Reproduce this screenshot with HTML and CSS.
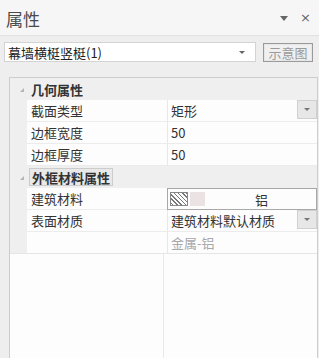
FILE: index.html
```html
<!DOCTYPE html>
<html lang="zh-CN">
<head>
    <meta charset="UTF-8">
    <title>属性</title>
    <link rel="stylesheet" href="styles.css">
</head>
<body>
    <div class="panel">
        <div class="header">
            <span class="title">属性</span>
            <span class="header-tools">
                <span class="menu-arrow"></span>
                <span class="close">×</span>
            </span>
        </div>
        <div class="toolbar">
            <div class="combo">
                <span>幕墙横梃竖梃(1)</span>
                <span class="combo-arrow"></span>
            </div>
            <button class="preview-btn">示意图</button>
        </div>
        <div class="grid">
            <div class="row category">
                <div class="gutter"><span class="expander"></span></div>
                <div class="cat-label">几何属性</div>
            </div>
            <div class="row">
                <div class="gutter"></div>
                <div class="name">截面类型</div>
                <div class="value">
                    <span>矩形</span>
                    <span class="drop-btn"><span class="drop-arrow"></span></span>
                </div>
            </div>
            <div class="row">
                <div class="gutter"></div>
                <div class="name">边框宽度</div>
                <div class="value">50</div>
            </div>
            <div class="row">
                <div class="gutter"></div>
                <div class="name">边框厚度</div>
                <div class="value">50</div>
            </div>
            <div class="row category">
                <div class="gutter"><span class="expander"></span></div>
                <div class="cat-label focused">外框材料属性</div>
            </div>
            <div class="row">
                <div class="gutter"></div>
                <div class="name">建筑材料</div>
                <div class="value material">
                    <span class="hatch"></span>
                    <span class="swatch"></span>
                    <span class="material-name">铝</span>
                </div>
            </div>
            <div class="row">
                <div class="gutter"></div>
                <div class="name">表面材质</div>
                <div class="value">
                    <span>建筑材料默认材质</span>
                    <span class="drop-btn"><span class="drop-arrow"></span></span>
                </div>
            </div>
            <div class="row">
                <div class="gutter"></div>
                <div class="name"></div>
                <div class="value muted">金属-铝</div>
            </div>
            <div class="filler">
                <div class="filler-left"></div>
                <div class="filler-right"></div>
            </div>
        </div>
    </div>
</body>
</html>
```

FILE: styles.css
```css
html, body {
    margin: 0;
    height: 100%;
}

body {
    font-family: "Noto Sans CJK SC", "Noto Sans", sans-serif;
    font-size: 13px;
    color: #333;
    background: #eeeeee;
    overflow: hidden;
}

.panel {
    display: flex;
    flex-direction: column;
    height: 100%;
}

.header {
    display: flex;
    align-items: center;
    justify-content: space-between;
    height: 35px;
    padding: 0 8px 0 6px;
    background: #f6f6f6;
    border-bottom: 1px solid #e2e2e2;
}

.title {
    font-size: 17px;
    color: #4a4a4a;
    line-height: 1;
    margin-top: 1px;
}

.header-tools {
    display: flex;
    align-items: center;
    gap: 12px;
}

.menu-arrow {
    width: 0;
    height: 0;
    border-left: 4px solid transparent;
    border-right: 4px solid transparent;
    border-top: 5px solid #666;
    margin-top: 2px;
}

.close {
    font-family: "DejaVu Sans", sans-serif;
    font-size: 13px;
    color: #666;
    line-height: 1;
}

.toolbar {
    display: flex;
    align-items: center;
    margin-top: 6px;
    padding: 0 6px 0 4px;
    gap: 7px;
}

.combo {
    flex: 1;
    height: 20px;
    box-sizing: border-box;
    border: 1px solid #d4d4d4;
    background: #fff;
    display: flex;
    align-items: center;
    justify-content: space-between;
    padding: 0 10px 0 3px;
    font-size: 13px;
    color: #222;
}

.combo-arrow {
    width: 0;
    height: 0;
    border-left: 3px solid transparent;
    border-right: 3px solid transparent;
    border-top: 3px solid #666;
}

.preview-btn {
    width: 50px;
    height: 19px;
    margin-top: 1px;
    padding: 0;
    box-sizing: border-box;
    border: 1px solid #9a9a9a;
    box-shadow: inset 0 0 0 1px #e6e6e6;
    background: #f0f0f0;
    font-family: inherit;
    font-size: 13px;
    color: #9a9a9a;
    line-height: 1;
}

.grid {
    flex: 1;
    display: flex;
    flex-direction: column;
    margin: 15px 1px 0 9px;
    border: 1px solid #cdcdcd;
    border-bottom: 0;
    background: #fdfdfd;
}

.row {
    display: flex;
    height: 22px;
}

.gutter {
    width: 17px;
    flex: none;
    background: #efefef;
}

.name {
    width: 136px;
    flex: none;
    padding-left: 4px;
    border-bottom: 1px solid #ececec;
    display: flex;
    align-items: center;
}

.value {
    flex: 1;
    border-left: 1px solid #e8e8e8;
    border-bottom: 1px solid #ececec;
    display: flex;
    align-items: center;
    justify-content: space-between;
    padding-left: 3px;
    min-width: 0;
}

.category {
    background: #efefef;
}

.category .gutter {
    display: flex;
    align-items: center;
    justify-content: center;
}

.expander {
    width: 0;
    height: 0;
    border-left: 4px solid transparent;
    border-bottom: 4px solid #b4b4b4;
    margin: 2px 0 0 6px;
}

.cat-label {
    font-weight: bold;
    color: #333;
    display: flex;
    align-items: center;
    padding-left: 4px;
}

.cat-label.focused {
    margin: 2px 0 2px 2px;
    padding: 0 2px;
    border: 1px solid #cccccc;
    background: #e9e9e9;
}

.drop-btn {
    width: 20px;
    height: 19px;
    box-sizing: border-box;
    border: 1px solid #d0d0d0;
    background: #e7e7e7;
    display: flex;
    align-items: center;
    justify-content: center;
    align-self: flex-start;
}

.drop-arrow {
    width: 0;
    height: 0;
    border-left: 3px solid transparent;
    border-right: 3px solid transparent;
    border-top: 3px solid #777;
}

.material {
    justify-content: flex-start;
    border: 1px solid #a8a8a8;
    padding-left: 2px;
    gap: 2px;
}

.hatch {
    width: 18px;
    height: 14px;
    box-sizing: border-box;
    border: 1px solid #888;
    background: repeating-linear-gradient(45deg, #fff 0 1px, #777 1px 2px, #fff 2px 3px);
}

.swatch {
    width: 15px;
    height: 14px;
    background: #ebe3e3;
}

.material-name {
    flex: 1;
    text-align: center;
}

.muted {
    color: #a8a8a8;
}

.filler {
    flex: 1;
    display: flex;
    border-top: 1px solid #e6e6e6;
    margin-top: -1px;
}

.filler-left {
    width: 153px;
}

.filler-right {
    flex: 1;
    border-left: 1px solid #e8e8e8;
}
```
